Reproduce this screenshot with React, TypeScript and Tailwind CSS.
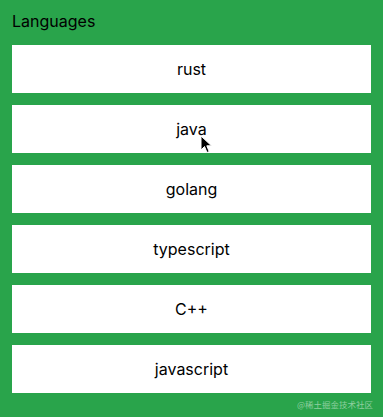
import React from "react";

const langs = ["rust", "java", "golang", "typescript", "C++", "javascript"];

export default function App() {
  return (
    <div className="relative w-[383px] h-[419px] bg-white" style={{ fontFamily: "Inter, 'Noto Sans', sans-serif" }}>
      <div className="h-[417px] bg-[#29a44b] px-3 pt-[9px] flex flex-col">
        <div className="text-base leading-6 text-black">Languages</div>
        <div className="mt-3 flex flex-col gap-3">
          {langs.map((l) => (
            <div key={l} className="h-12 bg-white flex items-center justify-center text-base text-black">
              {l}
            </div>
          ))}
        </div>
      </div>
      <div
        className="absolute left-[297px] top-[398px] whitespace-nowrap text-[8.5px] leading-3 text-[#8fcf9f]"
        style={{ fontFamily: "'Noto Sans CJK SC', sans-serif" }}
      >
        @稀土掘金技术社区
      </div>
      <svg className="absolute left-[200px] top-[135px]" width="13" height="19" viewBox="0 0 13 19">
        <path d="M1 1 L1 15 L4.5 11.5 L7 17.5 L9.2 16.6 L6.8 10.8 L11.5 10.8 Z" fill="#000" stroke="#fff" strokeWidth="1" strokeLinejoin="round" />
      </svg>
    </div>
  );
}
